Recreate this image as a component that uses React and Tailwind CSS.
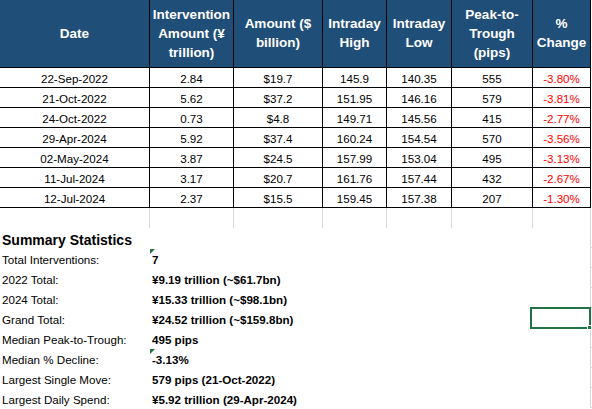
import React from 'react';

const rows = [
  ['22-Sep-2022', '2.84', '$19.7', '145.9', '140.35', '555', '-3.80%'],
  ['21-Oct-2022', '5.62', '$37.2', '151.95', '146.16', '579', '-3.81%'],
  ['24-Oct-2022', '0.73', '$4.8', '149.71', '145.56', '415', '-2.77%'],
  ['29-Apr-2024', '5.92', '$37.4', '160.24', '154.54', '570', '-3.56%'],
  ['02-May-2024', '3.87', '$24.5', '157.99', '153.04', '495', '-3.13%'],
  ['11-Jul-2024', '3.17', '$20.7', '161.76', '157.44', '432', '-2.67%'],
  ['12-Jul-2024', '2.37', '$15.5', '159.45', '157.38', '207', '-1.30%'],
];

const summary = [
  ['Total Interventions:', '7', true],
  ['2022 Total:', '¥9.19 trillion (~$61.7bn)'],
  ['2024 Total:', '¥15.33 trillion (~$98.1bn)'],
  ['Grand Total:', '¥24.52 trillion (~$159.8bn)'],
  ['Median Peak-to-Trough:', '495 pips'],
  ['Median % Decline:', '-3.13%', true],
  ['Largest Single Move:', '579 pips (21-Oct-2022)'],
  ['Largest Daily Spend:', '¥5.92 trillion (29-Apr-2024)'],
];

const cols = 'grid grid-cols-[150px_84px_89px_64px_65px_81px_58px_1fr]';

const headers = [
  ['Date'],
  ['Intervention', 'Amount (¥', 'trillion)'],
  ['Amount ($', 'billion)'],
  ['Intraday', 'High'],
  ['Intraday', 'Low'],
  ['Peak-to-', 'Trough', '(pips)'],
  ['%', 'Change'],
];

const Flag = () => (
  <div className="absolute left-0 top-[1px] h-0 w-0 border-t-[5px] border-r-[5px] border-t-[#217346] border-r-transparent" />
);

export default function App() {
  return (
    <div
      className="relative h-[409px] w-[592px] overflow-hidden bg-white text-[11.6px] text-black"
      style={{ fontFamily: "'Liberation Sans', Arial, sans-serif" }}
    >
      {/* header */}
      <div className={`${cols} h-[68px] bg-[#1f4e78]`}>
        {headers.map((h, i) => (
          <div
            key={i}
            className="flex flex-col items-center justify-center border-b border-r border-black pb-[1px] text-center text-[13.5px] font-bold leading-[19px] text-white"
          >
            {h.map((l) => (
              <span key={l}>{l}</span>
            ))}
          </div>
        ))}
        <div className="bg-white" />
      </div>

      {/* data rows */}
      {rows.map((r) => (
        <div key={r[0]} className={`${cols} h-[20px]`}>
          {r.map((c, i) => (
            <div
              key={i}
              className={`border-b border-r border-black pt-[2px] text-center leading-[17px] ${i === 6 ? 'text-[#ff0000]' : ''}`}
            >
              {c}
            </div>
          ))}
          <div />
        </div>
      ))}

      {/* empty row */}
      <div className={`${cols} h-[20px]`}>
        {[0, 1, 2, 3, 4, 5, 6].map((i) => (
          <div key={i} className="border-r border-[#d9d9d9]" />
        ))}
        <div />
      </div>

      {/* summary */}
      <div className="flex h-[20px]">
        <div className="w-[590px] pl-[2px] pt-[4px] text-[14px] font-bold leading-[16px]">Summary Statistics</div>
        <div className="flex-1 border-b border-l border-[#d9d9d9]" />
      </div>
      {summary.map(([label, value, flag]) => (
        <div key={label} className="flex h-[20px]">
          <div className="w-[150px] whitespace-nowrap pl-[2px] pt-[4px] leading-[16px]">{label}</div>
          <div className="relative w-[440px] whitespace-nowrap pl-[2px] pt-[4px] font-bold leading-[16px]">
            {flag && <Flag />}
            {value}
          </div>
          <div className="flex-1 border-b border-l border-[#d9d9d9]" />
        </div>
      ))}

      {/* active cell selection */}
      <div className="absolute left-[530px] top-[307px] h-[22px] w-[61px] border-2 border-[#217346]" />
      <div className="absolute left-[587px] top-[325px] h-[5px] w-[5px] border border-white bg-[#217346]" />
    </div>
  );
}
